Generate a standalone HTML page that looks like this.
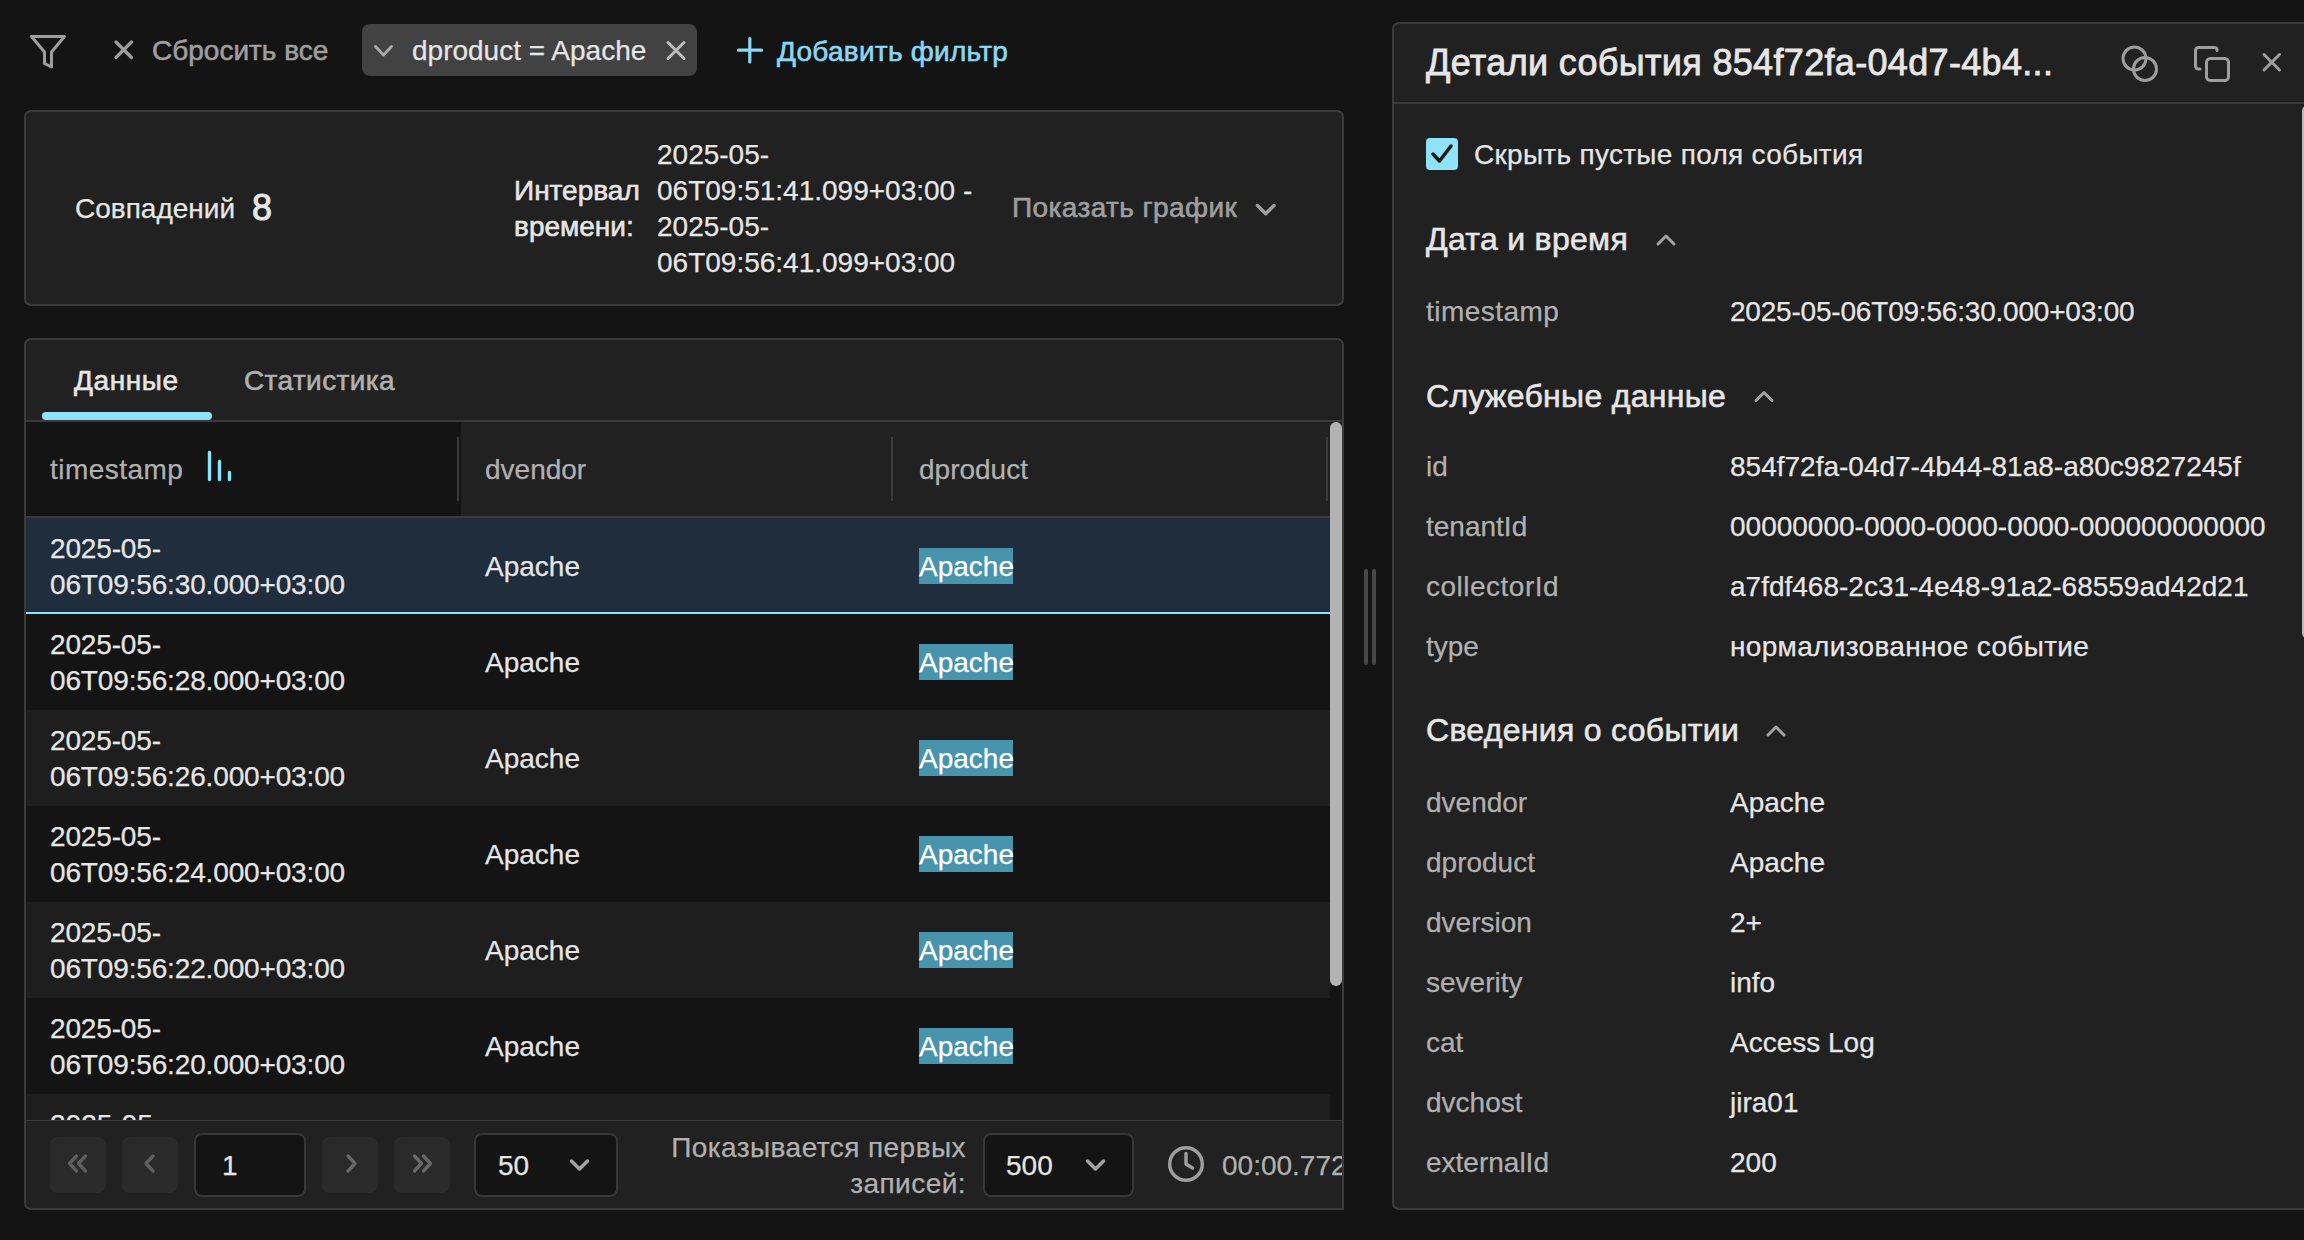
<!DOCTYPE html>
<html><head><meta charset="utf-8">
<style>
*{box-sizing:border-box;margin:0;padding:0}
html,body{width:2304px;height:1240px;overflow:hidden;background:#141414}
body{position:relative;font-family:"Liberation Sans",sans-serif;font-size:28px;line-height:36px;color:#e6e6e6}
.a{position:absolute}
.t{position:absolute;white-space:nowrap;font-size:28px;line-height:36px;margin-top:1px;-webkit-text-stroke:0.25px currentColor}
.g{color:#b0b0b0}
.b{font-weight:normal;-webkit-text-stroke:0.6px currentColor}
.card{position:absolute;background:#212121;border:2px solid #3b3b3b;border-radius:7px}
svg{position:absolute;overflow:visible}
@media (max-width:1600px){body{transform:scale(0.5);transform-origin:0 0}}
.hl{background:#4894ac;color:#fff;margin-top:0!important;padding-top:1px;height:36px}
.btn{position:absolute;background:#2a2a2a;border-radius:8px;width:56px;height:56px}
.inp{position:absolute;background:#141414;border:2px solid #383838;border-radius:8px}
.sec{position:absolute;white-space:nowrap;font-size:32px;line-height:40px;color:#e6e6e6;letter-spacing:0.3px;-webkit-text-stroke:0.6px currentColor;margin-top:0}
</style></head><body>

<!-- ===== Top bar ===== -->
<svg style="left:0;top:0" width="100" height="100">
  <path d="M31.5 36.5 H64.5 L51.5 52 V67 L44.5 63.5 V52 Z" fill="none" stroke="#9e9e9e" stroke-width="3" stroke-linejoin="round"/>
</svg>
<svg style="left:0;top:0" width="140" height="100">
  <path d="M116 42 L131.5 57.5 M131.5 42 L116 57.5" stroke="#9e9e9e" stroke-width="3.2" stroke-linecap="round"/>
</svg>
<div class="t b" style="left:152px;top:32px;color:#9e9e9e">Сбросить все</div>

<div class="a" style="left:362px;top:24px;width:335px;height:52px;background:#424242;border-radius:8px"></div>
<svg style="left:0;top:0" width="700" height="100">
  <path d="M375.5 46.5 L383.5 55 L391.5 46.5" fill="none" stroke="#a8a8a8" stroke-width="3" stroke-linecap="round" stroke-linejoin="round"/>
  <path d="M668 42.5 L684 58.5 M684 42.5 L668 58.5" stroke="#bdbdbd" stroke-width="3" stroke-linecap="round"/>
</svg>
<div class="t" style="left:412px;top:32px;color:#e6e6e6">dproduct = Apache</div>

<svg style="left:0;top:0" width="800" height="100">
  <path d="M749.8 38.5 V62 M738.5 50.2 H761.5" stroke="#8ad8f4" stroke-width="3.2" stroke-linecap="round"/>
</svg>
<div class="t b" style="left:777px;top:33px;color:#8ad8f4;letter-spacing:0.25px">Добавить фильтр</div>

<!-- ===== Summary card ===== -->
<div class="card" style="left:24px;top:110px;width:1320px;height:196px"></div>
<div class="t" style="left:75px;top:190px">Совпадений</div>
<div class="a b" style="left:252px;top:186px;font-size:36px;line-height:44px;letter-spacing:0;-webkit-text-stroke:1px currentColor">8</div>
<div class="t b" style="left:514px;top:172px">Интервал<br>времени:</div>
<div class="t" style="left:657px;top:136px">2025-05-<br>06T09:51:41.099+03:00 -<br>2025-05-<br>06T09:56:41.099+03:00</div>
<div class="t b" style="left:1012px;top:189px;color:#9e9e9e;letter-spacing:0.4px">Показать график</div>
<svg style="left:0;top:0" width="1400" height="300">
  <path d="M1257.5 205.5 L1265.7 213.7 L1274 205.5" fill="none" stroke="#9e9e9e" stroke-width="3.5" stroke-linecap="round" stroke-linejoin="round"/>
</svg>

<!-- ===== Tabs card ===== -->
<div class="card" style="left:24px;top:338px;width:1320px;height:872px;border-bottom-right-radius:0"></div>
<div class="t b" style="left:74px;top:362px;letter-spacing:0.6px">Данные</div>
<div class="t b g" style="left:244px;top:362px;letter-spacing:0.4px">Статистика</div>
<div class="a" style="left:42px;top:412px;width:170px;height:8px;border-radius:4px;background:#8fe3f9"></div>
<div class="a" style="left:26px;top:420px;width:1316px;height:2px;background:#3b3b3b"></div>

<!-- table header -->
<div class="a" style="left:26px;top:422px;width:435px;height:94px;background:#141414"></div>
<div class="a" style="left:26px;top:516px;width:1304px;height:2px;background:#3b3b3b"></div>
<div class="a" style="left:457px;top:437px;width:2px;height:64px;background:#3b3b3b"></div>
<div class="a" style="left:891px;top:437px;width:2px;height:64px;background:#3b3b3b"></div>
<div class="a" style="left:1326px;top:437px;width:2px;height:64px;background:#3b3b3b"></div>
<div class="t g" style="left:50px;top:451px;letter-spacing:0.45px">timestamp</div>
<svg style="left:0;top:0" width="300" height="520">
  <path d="M209.5 452.5 V479.5 M219.5 461.5 V479.5 M229.5 472.5 V479.5" stroke="#8fe3f9" stroke-width="3.4" stroke-linecap="round"/>
</svg>
<div class="t g" style="left:485px;top:451px">dvendor</div>
<div class="t g" style="left:919px;top:451px">dproduct</div>

<!-- rows -->
<div id="rows"></div>
<div class="a" style="left:26px;top:518px;width:1304px;height:94px;background:#1f2d3d"></div>
<div class="a" style="left:26px;top:612px;width:1304px;height:2px;background:#8fe3f9"></div>
<div class="a" style="left:26px;top:614px;width:1304px;height:96px;background:#141414"></div>
<div class="a" style="left:26px;top:710px;width:1304px;height:96px;background:#1e1e1e"></div>
<div class="a" style="left:26px;top:806px;width:1304px;height:96px;background:#141414"></div>
<div class="a" style="left:26px;top:902px;width:1304px;height:96px;background:#1e1e1e"></div>
<div class="a" style="left:26px;top:998px;width:1304px;height:96px;background:#141414"></div>
<div class="a" style="left:26px;top:1094px;width:1304px;height:26px;background:#1e1e1e;overflow:hidden">
  <div class="t" style="left:24px;top:12px">2025-05-</div>
</div>
<div class="a" style="left:1330px;top:518px;width:12px;height:602px;background:#141414"></div>

<div class="t" style="left:50px;top:530px;letter-spacing:-0.15px">2025-05-<br>06T09:56:30.000+03:00</div>
<div class="t" style="left:485px;top:548px">Apache</div>
<div class="t hl" style="left:919px;top:548px;width:94px">Apache</div>

<div class="t" style="left:50px;top:626px;letter-spacing:-0.15px">2025-05-<br>06T09:56:28.000+03:00</div>
<div class="t" style="left:485px;top:644px">Apache</div>
<div class="t hl" style="left:919px;top:644px;width:94px">Apache</div>

<div class="t" style="left:50px;top:722px;letter-spacing:-0.15px">2025-05-<br>06T09:56:26.000+03:00</div>
<div class="t" style="left:485px;top:740px">Apache</div>
<div class="t hl" style="left:919px;top:740px;width:94px">Apache</div>

<div class="t" style="left:50px;top:818px;letter-spacing:-0.15px">2025-05-<br>06T09:56:24.000+03:00</div>
<div class="t" style="left:485px;top:836px">Apache</div>
<div class="t hl" style="left:919px;top:836px;width:94px">Apache</div>

<div class="t" style="left:50px;top:914px;letter-spacing:-0.15px">2025-05-<br>06T09:56:22.000+03:00</div>
<div class="t" style="left:485px;top:932px">Apache</div>
<div class="t hl" style="left:919px;top:932px;width:94px">Apache</div>

<div class="t" style="left:50px;top:1010px;letter-spacing:-0.15px">2025-05-<br>06T09:56:20.000+03:00</div>
<div class="t" style="left:485px;top:1028px">Apache</div>
<div class="t hl" style="left:919px;top:1028px;width:94px">Apache</div>

<!-- scrollbar -->
<div class="a" style="left:1330px;top:422px;width:12px;height:564px;border-radius:6px;background:#b3b3b3"></div>

<!-- footer -->
<div class="a" style="left:26px;top:1120px;width:1316px;height:1.5px;background:#3b3b3b"></div>
<div class="a" style="left:26px;top:1121px;width:1316px;height:87px;background:#212121;border-bottom-left-radius:5px"></div>
<div class="btn" style="left:50px;top:1137px"></div>
<div class="btn" style="left:122px;top:1137px"></div>
<div class="btn" style="left:322px;top:1137px"></div>
<div class="btn" style="left:394px;top:1137px"></div>
<svg style="left:0;top:0" width="500" height="1240">
  <path d="M76.5 1156 L69.5 1163.5 L76.5 1171 M85.5 1156 L78.5 1163.5 L85.5 1171" fill="none" stroke="#5f5f5f" stroke-width="3.3" stroke-linecap="round" stroke-linejoin="round"/>
  <path d="M153 1156 L146 1163.5 L153 1171" fill="none" stroke="#5f5f5f" stroke-width="3.3" stroke-linecap="round" stroke-linejoin="round"/>
  <path d="M348 1156 L355 1163.5 L348 1171" fill="none" stroke="#686868" stroke-width="3.3" stroke-linecap="round" stroke-linejoin="round"/>
  <path d="M414.5 1156 L421.5 1163.5 L414.5 1171 M423.5 1156 L430.5 1163.5 L423.5 1171" fill="none" stroke="#686868" stroke-width="3.3" stroke-linecap="round" stroke-linejoin="round"/>
</svg>
<div class="inp" style="left:194px;top:1133px;width:112px;height:64px"></div>
<div class="t" style="left:222px;top:1147px">1</div>
<div class="inp" style="left:474px;top:1133px;width:144px;height:64px"></div>
<div class="t" style="left:498px;top:1147px">50</div>

<div class="t g" style="left:578px;top:1129px;width:388px;text-align:right;white-space:normal;letter-spacing:0.45px">Показывается первых записей:</div>
<div class="inp" style="left:983px;top:1133px;width:151px;height:64px"></div>
<div class="t" style="left:1006px;top:1147px">500</div>
<div class="a" style="left:1222px;top:1147px;width:120px;height:36px;overflow:hidden"><div class="t g" style="left:0;top:0">00:00.772</div></div>
<svg style="left:0;top:0" width="1400" height="1240">
  <path d="M571.5 1161 L579.5 1169 L587.5 1161" fill="none" stroke="#a3a3a3" stroke-width="3.5" stroke-linecap="round" stroke-linejoin="round"/>
  <path d="M1087.5 1161 L1095.5 1169 L1103.5 1161" fill="none" stroke="#a3a3a3" stroke-width="3.5" stroke-linecap="round" stroke-linejoin="round"/>
  <circle cx="1186" cy="1164" r="16.3" fill="none" stroke="#9e9e9e" stroke-width="3.5"/>
  <path d="M1186 1153.5 V1164 L1192.5 1168" fill="none" stroke="#9e9e9e" stroke-width="3.4" stroke-linecap="round" stroke-linejoin="round"/>
</svg>
<!-- card right & bottom border overlay -->


<!-- splitter -->
<div class="a" style="left:1364px;top:569px;width:4px;height:96px;background:#484848;border-radius:2px"></div>
<div class="a" style="left:1372px;top:569px;width:4px;height:96px;background:#484848;border-radius:2px"></div>

<!-- ===== Right panel ===== -->
<div class="card" style="left:1392px;top:22px;width:940px;height:1188px"></div>
<div class="a" style="left:1394px;top:102px;width:910px;height:2px;background:#3b3b3b"></div>
<div class="a b" style="left:1426px;top:41px;font-size:36px;line-height:44px;white-space:nowrap;letter-spacing:0.33px;-webkit-text-stroke:0.8px currentColor">Детали события 854f72fa-04d7-4b4...</div>
<svg style="left:0;top:0" width="2304" height="120">
  <circle cx="2134.5" cy="58.5" r="11.5" fill="none" stroke="#9e9e9e" stroke-width="3"/>
  <circle cx="2145" cy="69" r="11.5" fill="none" stroke="#9e9e9e" stroke-width="3"/>
  <path d="M2217 50.5 V49.5 A2.5 2.5 0 0 0 2214.5 47.5 H2198.5 A3 3 0 0 0 2195.5 50.5 V66 A3 3 0 0 0 2198.5 69 H2200" fill="none" stroke="#9e9e9e" stroke-width="3" stroke-linecap="round"/>
  <rect x="2206.5" y="58.5" width="22" height="22" rx="4" fill="none" stroke="#9e9e9e" stroke-width="3"/>
  <path d="M2264 54.5 L2279.5 70 M2279.5 54.5 L2264 70" stroke="#9e9e9e" stroke-width="3" stroke-linecap="round"/>
</svg>
<!-- panel scrollbar peek -->
<div class="a" style="left:2302px;top:105px;width:12px;height:534px;border-radius:6px;background:#bbbbbb"></div>

<div class="a" style="left:1426px;top:138px;width:32px;height:32px;border-radius:4px;background:#8fe3f9"></div>
<svg style="left:0;top:0" width="1500" height="200">
  <path d="M1433 154 L1439.5 161 L1451 146" fill="none" stroke="#1a1a1a" stroke-width="3.5" stroke-linecap="round" stroke-linejoin="round"/>
</svg>
<div class="t" style="left:1474px;top:136px;letter-spacing:0.3px">Скрыть пустые поля события</div>

<div class="sec" style="left:1426px;top:219px">Дата и время</div>
<div class="sec" style="left:1426px;top:376px">Служебные данные</div>
<div class="sec" style="left:1426px;top:710px">Сведения о событии</div>
<svg style="left:0;top:0" width="2304" height="800">
  <path d="M1658 244 L1666 236 L1674 244" fill="none" stroke="#a3a3a3" stroke-width="3" stroke-linecap="round" stroke-linejoin="round"/>
  <path d="M1756 400.5 L1764 392.5 L1772 400.5" fill="none" stroke="#a3a3a3" stroke-width="3" stroke-linecap="round" stroke-linejoin="round"/>
  <path d="M1768 735 L1776 727 L1784 735" fill="none" stroke="#a3a3a3" stroke-width="3" stroke-linecap="round" stroke-linejoin="round"/>
</svg>

<div class="t g" style="left:1426px;top:293px;letter-spacing:0.45px">timestamp</div>
<div class="t" style="left:1730px;top:293px;letter-spacing:-0.2px">2025-05-06T09:56:30.000+03:00</div>

<div class="t g" style="left:1426px;top:448px">id</div>
<div class="t" style="left:1730px;top:448px">854f72fa-04d7-4b44-81a8-a80c9827245f</div>
<div class="t g" style="left:1426px;top:508px">tenantId</div>
<div class="t" style="left:1730px;top:508px">00000000-0000-0000-0000-000000000000</div>
<div class="t g" style="left:1426px;top:568px;letter-spacing:0.5px">collectorId</div>
<div class="t" style="left:1730px;top:568px">a7fdf468-2c31-4e48-91a2-68559ad42d21</div>
<div class="t g" style="left:1426px;top:628px">type</div>
<div class="t" style="left:1730px;top:628px;letter-spacing:0.33px">нормализованное событие</div>

<div class="t g" style="left:1426px;top:784px">dvendor</div>
<div class="t" style="left:1730px;top:784px">Apache</div>
<div class="t g" style="left:1426px;top:844px">dproduct</div>
<div class="t" style="left:1730px;top:844px">Apache</div>
<div class="t g" style="left:1426px;top:904px">dversion</div>
<div class="t" style="left:1730px;top:904px">2+</div>
<div class="t g" style="left:1426px;top:964px">severity</div>
<div class="t" style="left:1730px;top:964px">info</div>
<div class="t g" style="left:1426px;top:1024px">cat</div>
<div class="t" style="left:1730px;top:1024px">Access Log</div>
<div class="t g" style="left:1426px;top:1084px">dvchost</div>
<div class="t" style="left:1730px;top:1084px">jira01</div>
<div class="t g" style="left:1426px;top:1144px">externalId</div>
<div class="t" style="left:1730px;top:1144px">200</div>

</body></html>
